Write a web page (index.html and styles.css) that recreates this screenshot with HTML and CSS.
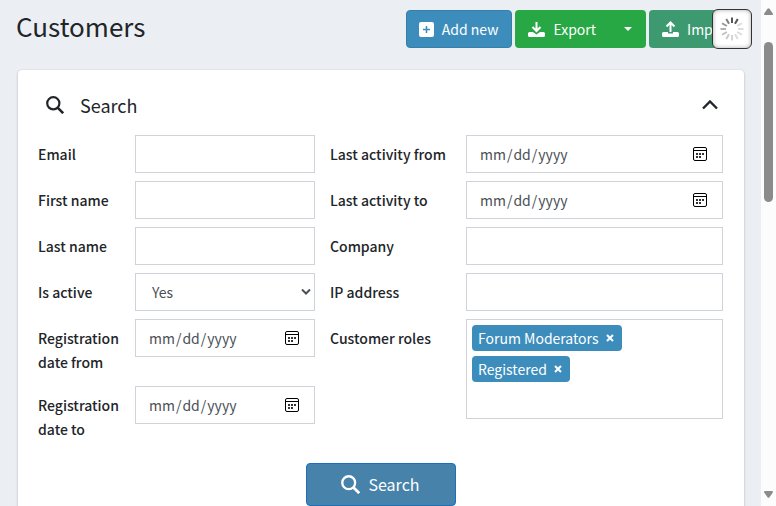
FILE: index.html
```html
<!DOCTYPE html>
<html lang="en">
<head>
<meta charset="utf-8">
<title>Customers</title>
<link rel="stylesheet" href="styles.css">
</head>
<body>
<main class="page">
  <header class="page-header">
    <h1>Customers</h1>
    <div class="actions">
      <button class="btn btn-primary" type="button">
        <svg viewBox="0 0 15 15" width="15" height="15" aria-hidden="true"><rect width="15" height="15" rx="2" fill="currentColor"/><path d="M7.500 4v7M4 7.500h7" stroke="#3c8dbc" stroke-width="1.500"/></svg>
        Add new
      </button>
      <div class="btn-group">
        <button class="btn btn-success" type="button">
          <svg viewBox="0 0 17 16" width="17" height="16" aria-hidden="true"><path d="M8.500 1v9M4.500 6l4 4 4-4" fill="none" stroke="currentColor" stroke-width="2"/><path fill="currentColor" d="M1.500 11H5l3.500 2.500L12 11h3.500q1.500 0 1.500 1.500v2q0 1.500-1.500 1.500h-14Q0 16 0 14.500v-2Q0 11 1.500 11z"/></svg>
          Export
        </button>
        <button class="btn btn-success btn-toggle" type="button" aria-label="Export options"><span class="caret"></span></button>
      </div>
      <button class="btn btn-import" type="button">
        <svg viewBox="0 0 17 16" width="17" height="16" aria-hidden="true"><path d="M8.500 11V2M4.500 5.500l4-4 4 4" fill="none" stroke="currentColor" stroke-width="2"/><path fill="currentColor" d="M1.500 11H6v1.500h5V11h4.500q1.500 0 1.500 1.500v2q0 1.500-1.500 1.500h-14Q0 16 0 14.500v-2Q0 11 1.500 11z"/></svg>
        Import
      </button>
    </div>
    <div class="loader" role="status" aria-label="Loading">
      <svg viewBox="-12 -12 24 24" width="24" height="24" stroke="#555" stroke-width="2">
        <path d="M0-6v-5.500"/>
        <path d="M0-6v-5.500" transform="rotate(30)"/>
        <path d="M0-6v-5.500" transform="rotate(60)" opacity=".2"/>
        <path d="M0-6v-5.500" transform="rotate(90)" opacity=".2"/>
        <path d="M0-6v-5.500" transform="rotate(120)" opacity=".2"/>
        <path d="M0-6v-5.500" transform="rotate(150)" opacity=".2"/>
        <path d="M0-6v-5.500" transform="rotate(180)" opacity=".24"/>
        <path d="M0-6v-5.500" transform="rotate(210)" opacity=".3"/>
        <path d="M0-6v-5.500" transform="rotate(240)" opacity=".36"/>
        <path d="M0-6v-5.500" transform="rotate(270)" opacity=".45"/>
        <path d="M0-6v-5.500" transform="rotate(300)" opacity=".6"/>
        <path d="M0-6v-5.500" transform="rotate(330)" opacity=".75"/>
      </svg>
    </div>
  </header>

  <section class="card">
    <div class="card-header">
      <svg viewBox="0 0 18 18" width="18" height="18" fill="none" stroke="currentColor" aria-hidden="true"><circle cx="7.300" cy="7.300" r="6.100" stroke-width="2.200"/><path d="M11.600 11.600l5.600 5.600" stroke-width="2.600"/></svg>
      <h2>Search</h2>
      <button class="collapse" type="button" aria-label="Collapse search"><svg viewBox="0 0 16 10" width="16" height="10" fill="none" stroke="currentColor" stroke-width="2.400"><path d="M1 8.500l7-7 7 7"/></svg></button>
    </div>
    <form class="search-form">
      <div class="columns">
        <div class="column column-left">
          <div class="field"><label for="email">Email</label><input class="control" id="email" type="text"></div>
          <div class="field"><label for="first">First name</label><input class="control" id="first" type="text"></div>
          <div class="field"><label for="last">Last name</label><input class="control" id="last" type="text"></div>
          <div class="field"><label for="active">Is active</label><select class="control" id="active"><option>Yes</option><option>No</option></select></div>
          <div class="field"><label for="reg-from">Registration date from</label><input class="control" id="reg-from" type="date"></div>
          <div class="field"><label for="reg-to">Registration date to</label><input class="control" id="reg-to" type="date"></div>
        </div>
        <div class="column column-right">
          <div class="field"><label for="act-from">Last activity from</label><input class="control" id="act-from" type="date"></div>
          <div class="field"><label for="act-to">Last activity to</label><input class="control" id="act-to" type="date"></div>
          <div class="field"><label for="company">Company</label><input class="control" id="company" type="text"></div>
          <div class="field"><label for="ip">IP address</label><input class="control" id="ip" type="text"></div>
          <div class="field">
            <label id="roles-label">Customer roles</label>
            <div class="roles" role="group" aria-labelledby="roles-label">
              <span class="tag">Forum Moderators<button type="button" aria-label="Remove Forum Moderators"><svg viewBox="0 0 8 8" width="8" height="8" stroke="currentColor" stroke-width="2"><path d="M1 1l6 6M7 1L1 7"/></svg></button></span>
              <span class="tag">Registered<button type="button" aria-label="Remove Registered"><svg viewBox="0 0 8 8" width="8" height="8" stroke="currentColor" stroke-width="2"><path d="M1 1l6 6M7 1L1 7"/></svg></button></span>
            </div>
          </div>
        </div>
      </div>
      <button class="btn btn-search" type="button">
        <svg viewBox="0 0 18 18" width="19" height="19" fill="none" stroke="currentColor" aria-hidden="true"><circle cx="7.300" cy="7.300" r="6.100" stroke-width="2.200"/><path d="M11.600 11.600l5.600 5.600" stroke-width="2.600"/></svg>
        Search
      </button>
    </form>
  </section>
</main>
<div class="scrollbar" aria-hidden="true">
  <svg viewBox="0 0 9 7" width="9" height="7"><path fill="#8b8b8b" d="M3.500.8q1-1.200 2 0L8.800 5.500Q9.200 7 8 7H1Q-.2 7 .2 5.500z"/></svg>
  <span class="thumb"></span>
  <svg class="down" viewBox="0 0 9 7" width="9" height="7"><path fill="#8b8b8b" d="M3.500 6.200q1 1.200 2 0L8.800 1.500Q9.200 0 8 0H1Q-.2 0 .2 1.500z"/></svg>
</div>
</body>
</html>
```
FILE: styles.css
```css
* {
  box-sizing: border-box;
}

body {
  margin: 0;
  display: flex;
  height: 100vh;
  overflow: hidden;
  background: #ebeff4;
  color: #212529;
  font: 14px/24px "Noto Sans CJK SC", "Noto Sans", sans-serif;
}

button,
input,
select {
  font: inherit;
  color: inherit;
  margin: 0;
}

h1,
h2 {
  margin: 0;
  font-weight: 400;
}

.page {
  flex: 1;
  min-width: 0;
}

.page-header {
  position: relative;
  display: flex;
  justify-content: space-between;
  padding: 10px 15px 22px 16px;
}

h1 {
  font-size: 26px;
  line-height: 32px;
}

.actions {
  display: flex;
  gap: 3px;
}

.btn {
  display: flex;
  align-items: center;
  gap: 8px;
  height: 38px;
  padding: 0 13px 0 12px;
  border: 1px solid transparent;
  border-radius: 4px;
  color: #fff;
  white-space: nowrap;
}

.btn-primary {
  background: #3c8dbc;
  border-color: #367fa9;
}

.btn-success {
  background: #28a745;
}

.btn-import {
  background: #3d9970;
}

.btn-group {
  display: flex;
}

.btn-group .btn:first-child {
  padding-right: 14px;
  border-radius: 4px 0 0 4px;
}

.btn-group .btn-toggle {
  border-radius: 0 4px 4px 0;
}

.caret {
  border: 4px solid transparent;
  border-top-color: #fff;
  border-bottom: 0;
}

.loader {
  position: absolute;
  top: 9px;
  right: 9px;
  display: grid;
  place-items: center;
  width: 40px;
  height: 40px;
  border: 1px solid #333;
  border-radius: 6px;
  background: #fff;
  box-shadow: inset 0 0 4px #aaa;
}

.card {
  margin: 0 17px 0 18px;
  padding: 0 21px 30px 20px;
  background: #fff;
  border-radius: 4px;
  box-shadow: 0 0 1px rgba(0, 0, 0, .13), 0 1px 3px rgba(0, 0, 0, .2);
}

.card-header {
  display: flex;
  align-items: center;
  gap: 16px;
  height: 65px;
  padding: 4px 5px 0 8px;
}

h2 {
  flex: 1;
  font-size: 18px;
}

.collapse {
  display: flex;
  padding: 0;
  border: 0;
  background: none;
}

.columns {
  display: grid;
  grid-template-columns: 277fr 393fr;
  gap: 15px;
}

.column {
  display: flex;
  flex-direction: column;
  gap: 8px;
}

.field {
  display: grid;
  align-items: start;
}

.column-left .field {
  grid-template-columns: 97px 1fr;
}

.column-right .field {
  grid-template-columns: 136px 1fr;
}

label {
  padding-top: 7px;
  font-weight: 500;
}

.column-left .field:nth-child(n+5) label {
  padding-bottom: 4px;
}

.control {
  width: 100%;
  height: 38px;
  padding: 6px 12px;
  border: 1px solid #ced4da;
  border-radius: 0;
  background: #fff;
  color: #495057;
}

select.control {
  appearance: none;
  padding-left: 16px;
  background: #fff url("data:image/svg+xml,%3Csvg xmlns='http://www.w3.org/2000/svg' width='10' height='6' fill='none' stroke='%23495057' stroke-width='2'%3E%3Cpath d='M1 .5l4 4 4-4'/%3E%3C/svg%3E") no-repeat right 3px center;
}

input::-webkit-calendar-picker-indicator {
  width: 14px;
  height: 14px;
  padding: 0;
  margin-right: 3px;
  background: url("data:image/svg+xml,%3Csvg xmlns='http://www.w3.org/2000/svg' width='14' height='14'%3E%3Crect x='.5' y='.5' width='13' height='13' rx='1.5' fill='none' stroke='%23000'/%3E%3Cpath d='M1 3.500h12' stroke='%23000'/%3E%3Cpath d='M3 6h2v2H3zM6 6h2v2H6zM9 6h2v2H9zM3 9h2v2H3zM6 9h2v2H6z' fill='%23333'/%3E%3C/svg%3E") no-repeat center;
}

.roles {
  display: flex;
  flex-direction: column;
  align-items: flex-start;
  gap: 5px;
  height: 100px;
  padding: 5px;
  border: 1px solid #ced4da;
}

.tag {
  display: flex;
  align-items: center;
  gap: 7px;
  height: 26px;
  padding: 0 8px 0 6px;
  border-radius: 4px;
  background: #3c8dbc;
  color: #fff;
}

.tag button {
  display: flex;
  padding: 0;
  border: 0;
  background: none;
}

.btn-search {
  justify-content: center;
  width: 150px;
  height: 43px;
  margin: 18px auto 0;
  padding: 0 12px 1px;
  border-color: #1b6ec2;
  background: #4682a9;
  font-size: 16px;
}

.scrollbar {
  display: flex;
  flex-direction: column;
  align-items: center;
  width: 15px;
  padding: 8px 0;
  background: #fcfcfc;
}

.thumb {
  width: 9px;
  height: 160px;
  margin-top: 27px;
  border-radius: 5px;
  background: #8b8b8b;
}

.down {
  margin-top: auto;
}
```
